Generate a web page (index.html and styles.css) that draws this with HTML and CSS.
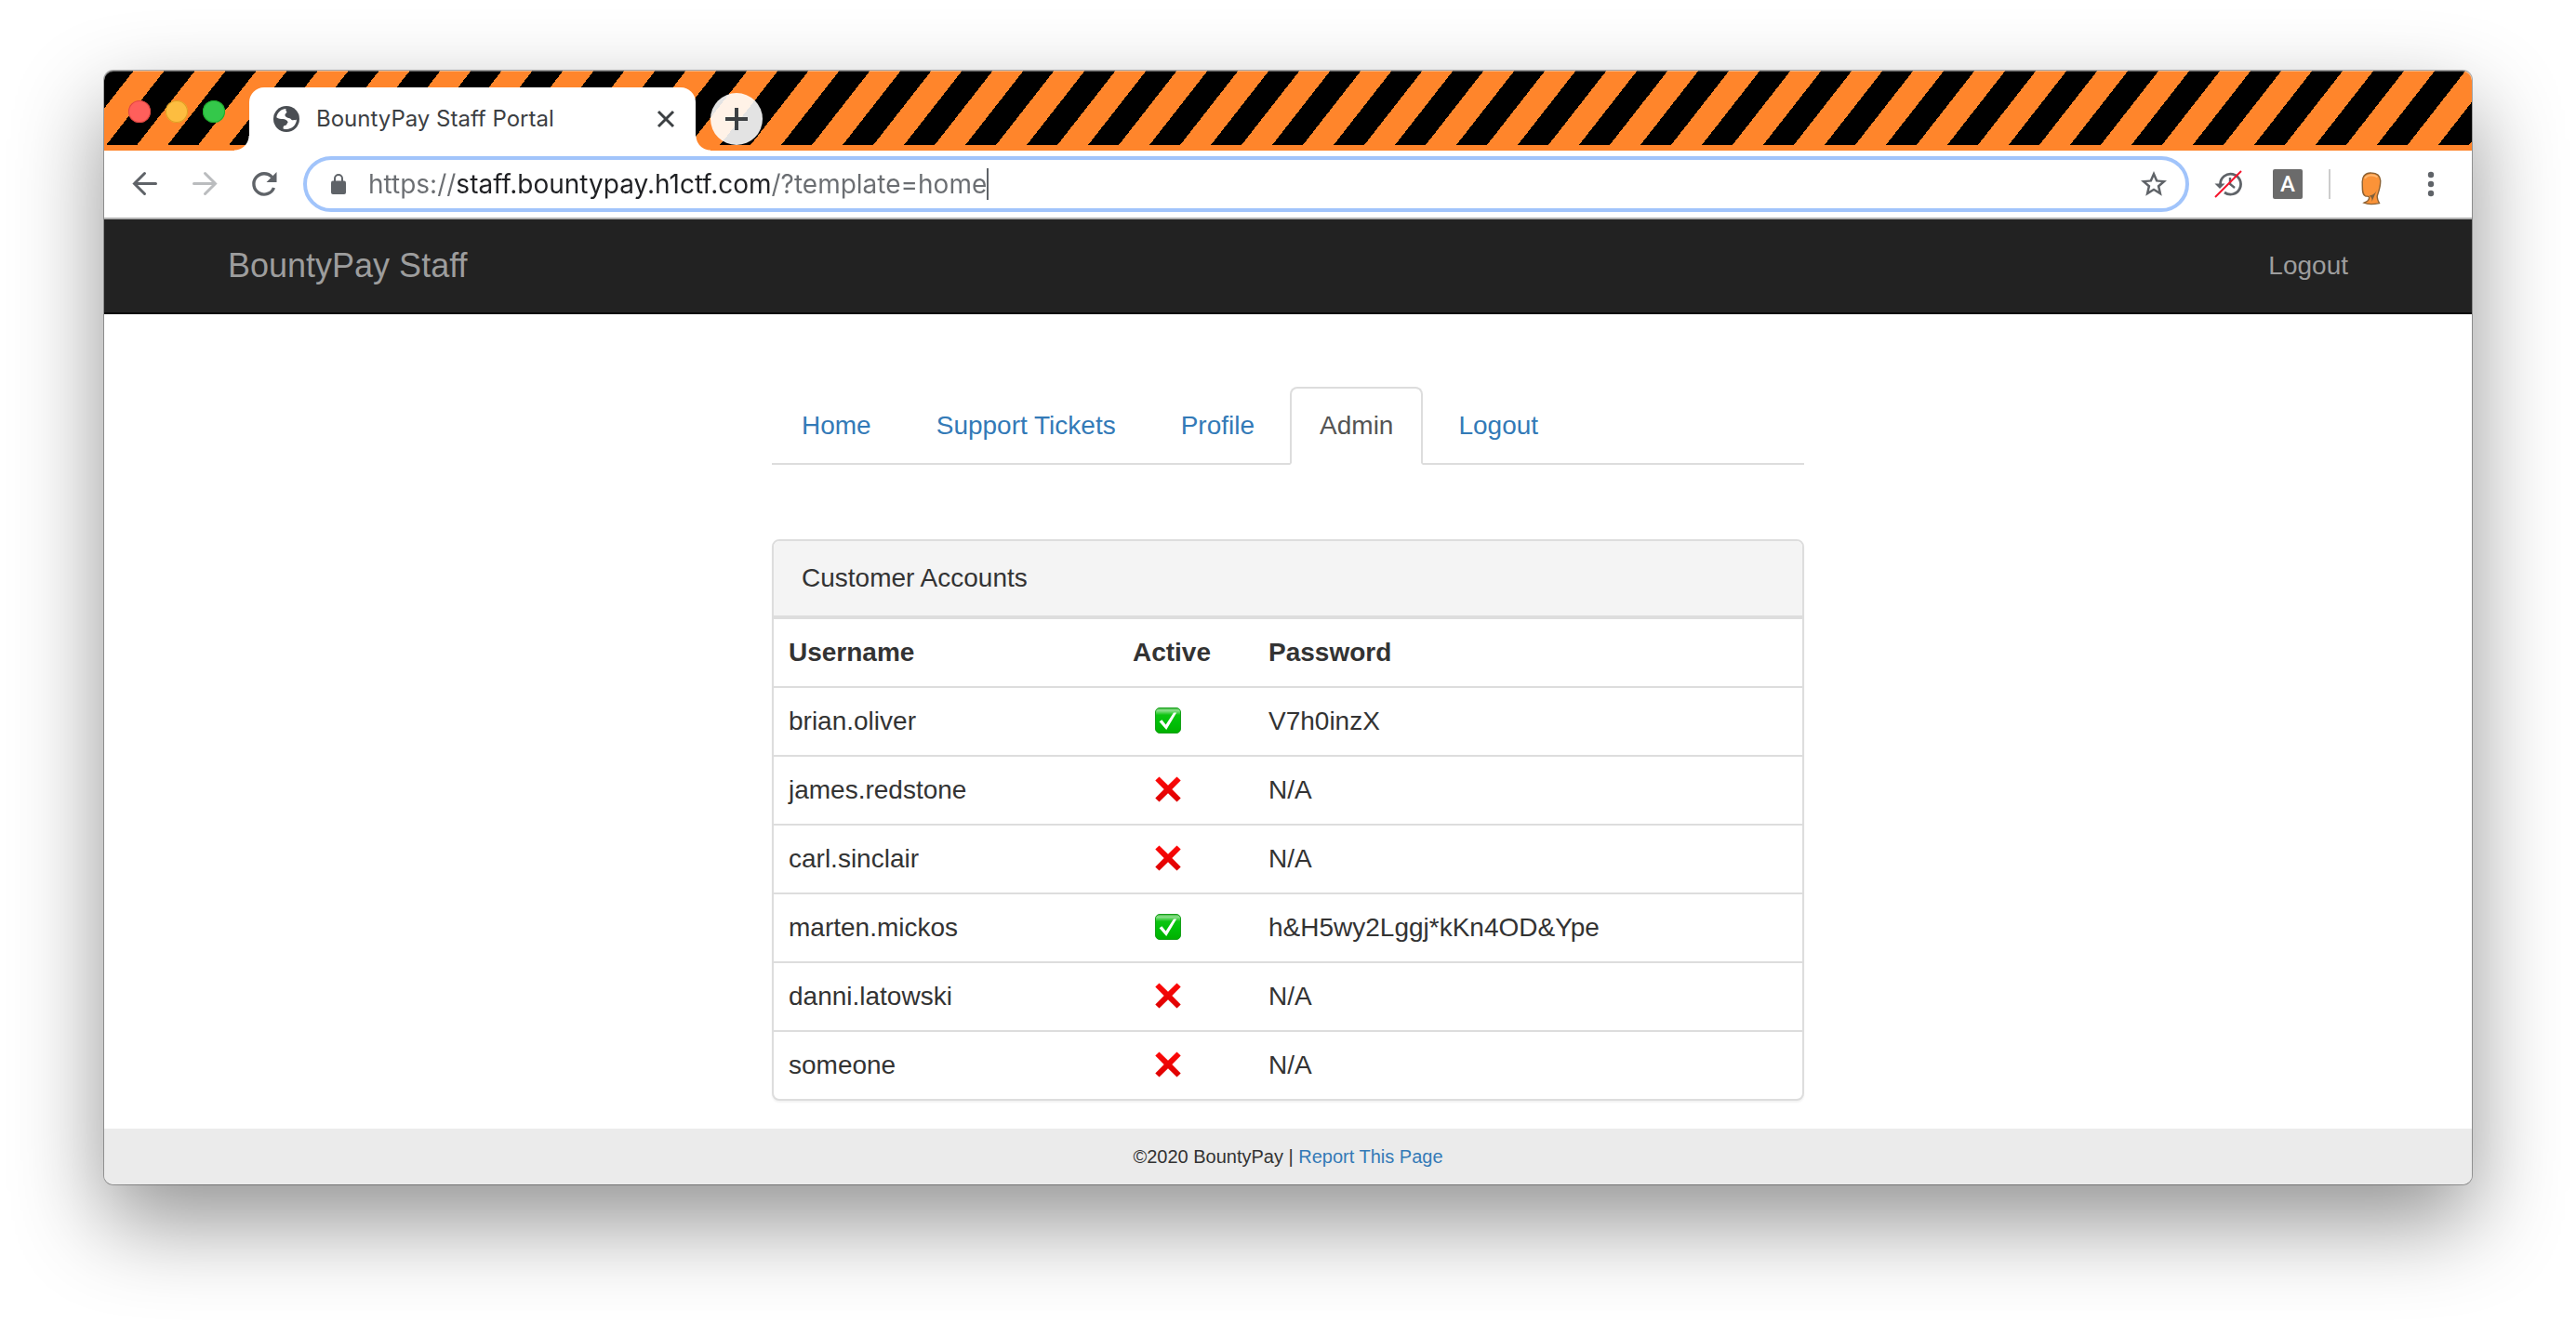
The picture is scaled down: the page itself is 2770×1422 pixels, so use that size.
FILE: index.html
```html
<!DOCTYPE html>
<html lang="en">
<head>
<meta charset="utf-8">
<title>BountyPay Staff Portal</title>
<link rel="stylesheet" href="styles.css">
</head>
<body>
<svg class="sprite" aria-hidden="true">
  <defs>
    <linearGradient id="green" x1="0" y1="0" x2="0" y2="1">
      <stop offset="0" stop-color="#3cb83c"/><stop offset=".1" stop-color="#8fe08f"/><stop offset=".28" stop-color="#0cc410"/><stop offset=".6" stop-color="#00bf08"/><stop offset="1" stop-color="#00b000"/>
    </linearGradient>
    <linearGradient id="red" x1="0" y1="0" x2="0" y2="1">
      <stop offset="0" stop-color="#ff0a0a"/><stop offset="1" stop-color="#dc0000"/>
    </linearGradient>
  </defs>
  <symbol id="yes" viewBox="0 0 28 28">
    <rect x=".5" y=".5" width="27" height="27" rx="4.5" fill="url(#green)" stroke="#17a01b"/>
    <path d="M4.6 15.2 7.4 13.2 11.6 18.6 20 5.6 23.2 5.6 12.2 24Z" fill="#fff"/>
  </symbol>
  <symbol id="no" viewBox="0 0 28 28">
    <path d="M4.500 .5 14 9.800 23.500 .5 27.700 4.600 18.300 14 27.700 23.400 23.500 27.500 14 18.200 4.500 27.500 .3 23.400 9.700 14 .3 4.600Z" fill="url(#red)"/>
  </symbol>
</svg>

<div class="window">
  <header class="tabstrip">
    <div class="lights">
      <button class="light light-close" aria-label="Close window"></button>
      <button class="light light-min" aria-label="Minimise window"></button>
      <button class="light light-zoom" aria-label="Zoom window"></button>
    </div>
    <div class="browser-tab">
      <svg class="globe" viewBox="0 0 28 28" aria-hidden="true">
        <circle cx="14" cy="14" r="14" fill="#4a4e53"/>
        <path fill="#fff" d="M13.6 3.1C8.500 3.300 4.200 6.900 3.300 12.200 5.600 14 7.900 13.800 10.100 14 12.600 14.200 14.900 15.200 15.700 17.600 14.500 18.600 14.700 20.300 13.200 20.800 11.200 21.300 10.500 21.600 10.600 24.400 17.500 26.700 24.800 21.700 24.900 14.600 23.800 15.600 22.500 14.900 21.600 15.200 20.500 15.500 19.300 15 18.700 13.900 18 12.900 16.800 13.300 15.400 12.700 13.300 12 12.300 11 12.500 9.300 12.600 7.900 14.700 7.800 14.300 6.300 14.100 5.200 12.700 5 13.600 3.100Z"/>
      </svg>
      <span class="browser-tab-title">BountyPay Staff Portal</span>
      <button class="bare" aria-label="Close tab">
        <svg width="20" height="20" viewBox="0 0 20 20"><path d="M2 2 18 18M18 2 2 18" stroke="#3c4043" stroke-width="3"/></svg>
      </button>
    </div>
    <button class="new-tab" aria-label="New tab">
      <svg width="24" height="24" viewBox="0 0 24 24"><path d="M12 0V24M0 12H24" stroke="#3c4043" stroke-width="4"/></svg>
    </button>
  </header>

  <div class="toolbar">
    <button class="bare" aria-label="Back">
      <svg width="32" height="32" viewBox="0 0 32 32" fill="none" stroke="#5f6368" stroke-width="3" stroke-linecap="round"><path d="M27.500 15.500H4.500M15.500 4.500 4.500 15.500 15.500 26.500"/></svg>
    </button>
    <button class="bare" aria-label="Forward">
      <svg width="32" height="32" viewBox="0 0 32 32" fill="none" stroke="#babcbe" stroke-width="3" stroke-linecap="round"><path d="M4.500 15.500H27.500M16.500 4.500 27.500 15.500 16.500 26.500"/></svg>
    </button>
    <button class="bare" aria-label="Reload">
      <svg width="32" height="32" viewBox="0 0 32 32"><path d="M26.500 20A11.200 11.200 0 1 1 24.500 8.500" fill="none" stroke="#5f6368" stroke-width="3.400"/><path d="M29.500 3V14H18.500Z" fill="#5f6368"/></svg>
    </button>
    <div class="omnibox">
      <svg width="18" height="24" viewBox="0 0 18 24" aria-hidden="true"><path d="M5 10V6a4 4 0 0 1 8 0V10" fill="none" stroke="#5f6368" stroke-width="2"/><rect x="1" y="8.500" width="16" height="14.500" rx="2" fill="#5f6368"/></svg>
      <div class="address">
        <input class="url" type="text" size="48" aria-label="Address" value="https://staff.bountypay.h1ctf.com/?template=home">
        <span class="caret"></span>
      </div>
      <button class="bare" aria-label="Bookmark this page">
        <svg width="32" height="32" viewBox="0 0 24 24"><path fill="#5f6368" d="M22.500 9.240l-7.410-.640L12 1.500 8.910 8.610 1.500 9.240l5.630 4.880L5.440 21.500 12 17.500l6.560 4-1.680-7.380zM12 15.400l-3.760 2.270 1-4.280-3.320-2.880 4.380-.380L12 6.100l1.710 4.040 4.380.380-3.320 2.880 1 4.280z"/></svg>
      </button>
    </div>
    <div class="extensions">
      <button class="bare" aria-label="History disabled">
        <svg width="32" height="32" viewBox="0 0 32 32" fill="none"><path d="M7.500 16A11 11 0 1 1 12 25" stroke="#5f6368" stroke-width="2.800"/><path d="M18 9V16L23 20" stroke="#5f6368" stroke-width="2.400"/><path d="M1.500 15.500H12.500L7 21Z" fill="#5f6368"/><path d="M2 30 30 2" stroke="#f5142b" stroke-width="2"/></svg>
      </button>
      <button class="bare badge" aria-label="Extension A">A</button>
      <span class="divider"></span>
      <button class="bare" aria-label="Profile">
        <svg width="32" height="48" viewBox="0 -8 32 48"><path d="M16 4C9 3.500 6 8.500 6.200 14 6.500 20 5.500 27 9.500 28.800 11 29.400 13 28.800 13.500 30 14 33 11 35 8 36.200 12 38 20 37.500 24.500 36.600 23 34 21.500 31 22.500 28 24.500 22 26 18 25.700 12 25.300 8 23 4.300 16 4Z" fill="#fb9338" stroke="#8d6233" stroke-width="1.400"/><path d="M13.500 28.500C18 28 20 26 22 22L16.500 35C17 31 15.500 29.500 13.500 28.500Z" fill="#80603a"/><path d="M9 10C11 5.500 19 5.500 22.500 8.500" fill="none" stroke="#ffb56e" stroke-width="2"/></svg>
      </button>
      <button class="bare menu" aria-label="Menu">
        <svg width="32" height="32" viewBox="0 0 32 32" fill="#5f6368"><circle cx="16" cy="6" r="3.200"/><circle cx="16" cy="16" r="3.200"/><circle cx="16" cy="26" r="3.200"/></svg>
      </button>
    </div>
  </div>

  <nav class="navbar">
    <div class="container">
      <a class="brand" href="#">BountyPay Staff</a>
      <a class="nav-link" href="#">Logout</a>
    </div>
  </nav>

  <main class="content">
    <ul class="tabs">
      <li><a href="#">Home</a></li>
      <li><a href="#">Support Tickets</a></li>
      <li><a href="#">Profile</a></li>
      <li><a class="active" href="#" aria-current="page">Admin</a></li>
      <li><a href="#">Logout</a></li>
    </ul>

    <section class="panel">
      <h1 class="panel-heading">Customer Accounts</h1>
      <table class="accounts">
        <thead>
          <tr><th class="col-user" scope="col">Username</th><th class="col-active" scope="col">Active</th><th scope="col">Password</th></tr>
        </thead>
        <tbody>
          <tr><td>brian.oliver</td><td class="col-active"><svg class="mark" role="img" aria-label="Yes"><use href="#yes"/></svg></td><td>V7h0inzX</td></tr>
          <tr><td>james.redstone</td><td class="col-active"><svg class="mark" role="img" aria-label="No"><use href="#no"/></svg></td><td>N/A</td></tr>
          <tr><td>carl.sinclair</td><td class="col-active"><svg class="mark" role="img" aria-label="No"><use href="#no"/></svg></td><td>N/A</td></tr>
          <tr><td>marten.mickos</td><td class="col-active"><svg class="mark" role="img" aria-label="Yes"><use href="#yes"/></svg></td><td>h&amp;H5wy2Lggj*kKn4OD&amp;Ype</td></tr>
          <tr><td>danni.latowski</td><td class="col-active"><svg class="mark" role="img" aria-label="No"><use href="#no"/></svg></td><td>N/A</td></tr>
          <tr><td>someone</td><td class="col-active"><svg class="mark" role="img" aria-label="No"><use href="#no"/></svg></td><td>N/A</td></tr>
        </tbody>
      </table>
    </section>
  </main>

  <footer class="footer">©2020 BountyPay | <a href="#">Report This Page</a></footer>
</div>
</body>
</html>
```
FILE: styles.css
```css
* { box-sizing: border-box; }

body {
  margin: 0;
  padding: 76px 112px 148px;
  background: #fff;
  color: #333;
  font: 28px/40px "Liberation Sans", Arial, sans-serif;
}

a { color: #337ab7; text-decoration: none; }

button, input { font: inherit; border: 0; padding: 0; margin: 0; background: none; }

svg { display: block; }

.sprite { position: absolute; width: 0; height: 0; }

.window {
  border-radius: 10px;
  background: #fff;
  box-shadow: 0 0 0 1px rgba(0, 0, 0, .3), 0 40px 96px rgba(0, 0, 0, .43);
}

/* Tab strip */
.tabstrip {
  display: flex;
  align-items: flex-end;
  height: 86px;
  padding-left: 26px;
  border-bottom: 6px solid #ff852b;
  border-radius: 10px 10px 0 0;
  background: repeating-linear-gradient(128deg, #000 0 25px, #ff852b 25px 51px, #000 51px 52px);
  box-shadow: inset 0 1px rgba(255, 255, 255, .4);
}

.lights { display: flex; gap: 16px; width: 130px; margin-bottom: 24px; }

.light { width: 24px; height: 24px; border-radius: 50%; }
.light-close { background: #ff5f5b; box-shadow: inset 0 0 0 1px #e24640; }
.light-min { background: #fdbd40; box-shadow: inset 0 0 0 1px #dfa023; }
.light-zoom { background: #34c84a; box-shadow: inset 0 0 0 1px #1dad2b; }

.browser-tab {
  position: relative;
  display: flex;
  align-items: center;
  width: 480px;
  height: 68px;
  margin-bottom: -6px;
  padding: 0 22px 0 26px;
  border-radius: 16px 16px 0 0;
  background: #fff;
  color: #3c4043;
  font: 24px/32px Inter, sans-serif;
}

/* Flared feet of the tab */
.browser-tab::before, .browser-tab::after {
  content: "";
  position: absolute;
  bottom: 0;
  width: 16px;
  height: 16px;
}
.browser-tab::before { right: 100%; background: radial-gradient(circle at 0 0, transparent 15px, #fff 16px); }
.browser-tab::after { left: 100%; background: radial-gradient(circle at 100% 0, transparent 15px, #fff 16px); }

.globe { width: 28px; height: 28px; }

.browser-tab-title { flex: 1; margin-left: 18px; }

.bare { display: block; flex: none; }

.new-tab {
  display: grid;
  place-items: center;
  width: 56px;
  height: 56px;
  margin-left: 16px;
  border-radius: 50%;
  background: rgba(255, 255, 255, .89);
}

/* Toolbar */
.toolbar {
  display: flex;
  align-items: center;
  gap: 32px;
  height: 74px;
  padding: 0 28px;
  border-bottom: 2px solid #b0b0b0;
}

.omnibox {
  display: flex;
  flex: 1;
  align-items: center;
  height: 60px;
  margin-left: -6px;
  padding: 0 18px 0 25px;
  border: 4px solid #a1c4fb;
  border-radius: 30px;
}

.address { display: flex; flex: 1; align-items: center; margin-left: 23px; }

.url {
  field-sizing: content;
  height: 36px;
  outline: 0;
  color: #202124;
  font: 28px/36px Inter, sans-serif;
  background: linear-gradient(90deg, #6b6e72 96px, #202124 96px 433px, #6b6e72 433px);
  -webkit-background-clip: text;
  background-clip: text;
  -webkit-text-fill-color: transparent;
}

.caret { width: 2px; height: 34px; background: #5f6368; }

.extensions { display: flex; align-items: center; gap: 28px; margin-left: -6px; }

.badge {
  width: 32px;
  height: 32px;
  margin-left: 4px;
  border-radius: 2px;
  background: #6b6b6b;
  color: #fff;
  font: 500 24px/32px Roboto, sans-serif;
}

.divider { width: 2px; height: 32px; background: #ccc; }

.menu { margin-left: 4px; }

/* Site navigation */
.navbar { background: #222; border-bottom: 2px solid #080808; }

.container {
  display: flex;
  align-items: center;
  justify-content: space-between;
  max-width: 2340px;
  height: 100px;
  margin: 0 auto;
  padding: 0 30px;
}

.container a { color: #9d9d9d; }
.brand { font-size: 36px; }

/* Page */
.content { max-width: 1110px; margin: 0 auto; padding: 78px 0 30px; }

.tabs {
  display: flex;
  gap: 6px;
  margin: 0 0 80px;
  padding: 0;
  border-bottom: 2px solid #ddd;
  list-style: none;
}

.tabs li { margin-bottom: -2px; }

.tabs a {
  display: block;
  padding: 20px 30px;
  border: 2px solid transparent;
  border-radius: 8px 8px 0 0;
}

.tabs .active { border-color: #ddd #ddd #fff; background: #fff; color: #555; }

.panel {
  border: 2px solid #ddd;
  border-radius: 8px;
  background: #fff;
  box-shadow: 0 2px 2px rgba(0, 0, 0, .05);
}

.panel-heading {
  margin: 0;
  padding: 20px 30px;
  border-bottom: 2px solid #ddd;
  border-radius: 6px 6px 0 0;
  background: #f4f4f4;
  font: inherit;
}

.accounts { width: 100%; border-spacing: 0; table-layout: fixed; }

.accounts th, .accounts td {
  height: 74px;
  padding: 16px;
  border-top: 2px solid #ddd;
  text-align: left;
}

.accounts .col-user { width: 340px; }
.accounts .col-active { width: 176px; text-align: center; }

.accounts td.col-active { padding-right: 24px; }

.mark { width: 28px; height: 28px; margin: 0 auto 2px; }

.footer {
  padding: 10px;
  border-radius: 0 0 10px 10px;
  background: #ebebeb;
  font-size: 20px;
  text-align: center;
}
```
